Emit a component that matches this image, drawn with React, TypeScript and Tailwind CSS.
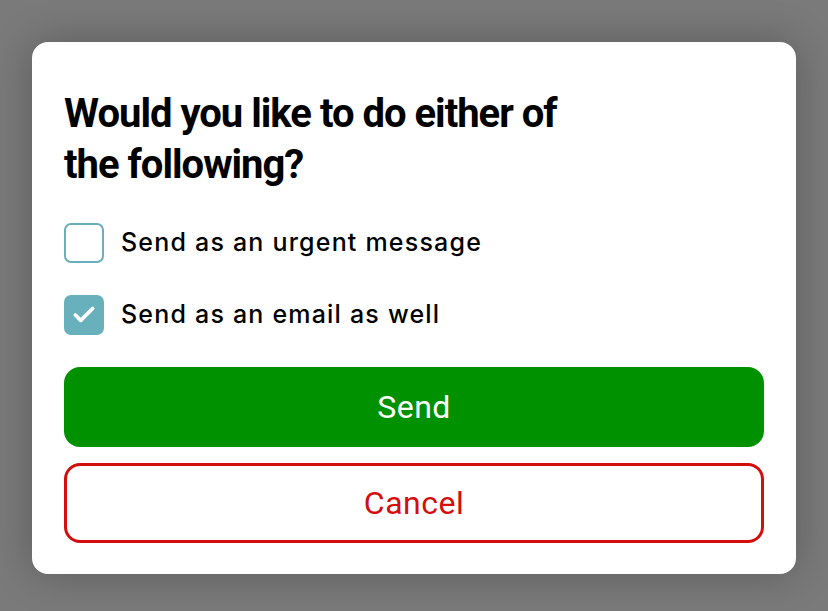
import { Check } from "lucide-react"

const body = "font-['Inter','Noto_Sans',sans-serif]"

function Option({ label, checked }: { label: string; checked?: boolean }) {
  return (
    <label className="flex items-center gap-[17px] h-[40px]">
      {checked ? (
        <span className="flex items-center justify-center w-[40px] h-[40px] rounded-[7px] bg-[#69b0bd]">
          <Check className="w-[26px] h-[26px] text-white" strokeWidth={3.4} />
        </span>
      ) : (
        <span className="w-[40px] h-[40px] rounded-[7px] border-2 border-[#6aaebc] bg-white" />
      )}
      <span className={`${body} text-[25px] font-medium text-black tracking-[1.2px]`}>{label}</span>
    </label>
  )
}

export default function App() {
  return (
    <div className="h-[611px] bg-[#7a7a7a] px-[32px] pt-[42px]">
      <div className="w-[764px] h-[532px] bg-white rounded-[16px] shadow-[0_0_40px_rgba(0,0,0,0.25)] px-[32px] pt-[46px]">
        <h2 className="font-['Roboto',sans-serif] font-bold text-[40px] leading-[51px] tracking-[-1px] text-black w-[520px]">
          Would you like to do either of the following?
        </h2>
        <div className="flex flex-col gap-[32px] mt-[33px]">
          <Option label="Send as an urgent message" />
          <Option label="Send as an email as well" checked />
        </div>
        <div className="flex flex-col gap-[16px] mt-[32px]">
          <button className="h-[80px] w-full rounded-[16px] bg-[#009100] text-white text-[32px] tracking-[0.5px] font-['Roboto',sans-serif]">
            Send
          </button>
          <button className="h-[80px] w-full rounded-[16px] border-[3px] border-[#d40d0d] bg-white text-[#d40d0d] text-[32px] tracking-[0.5px] font-['Roboto',sans-serif]">
            Cancel
          </button>
        </div>
      </div>
    </div>
  )
}
